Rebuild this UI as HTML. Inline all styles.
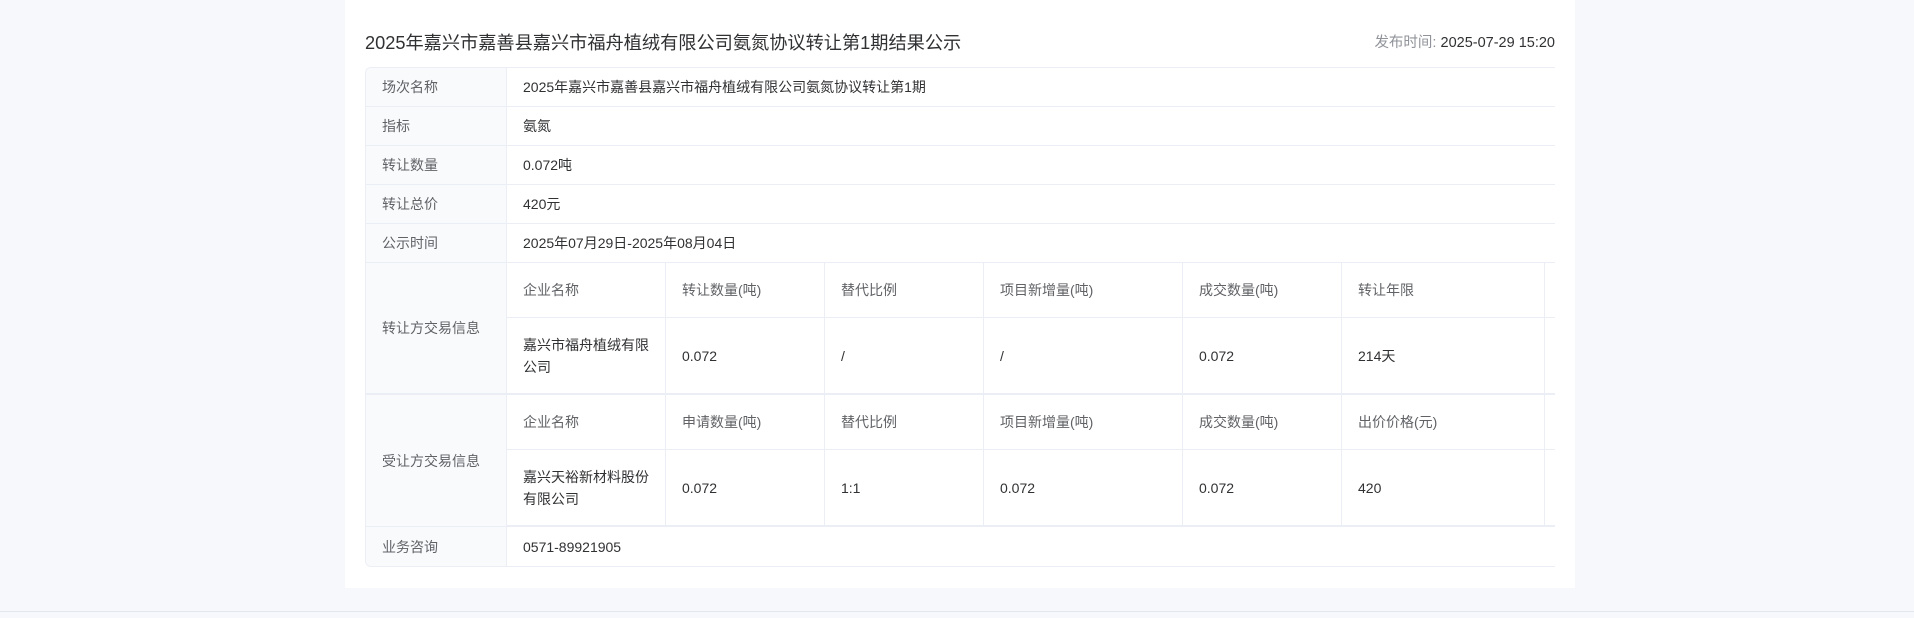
<!DOCTYPE html>
<html><head><meta charset="utf-8"><style>
*{margin:0;padding:0;box-sizing:border-box}
body{width:1914px;height:618px;background:#f7f8fb;font-family:"Liberation Sans","Noto Sans CJK SC",sans-serif;position:relative;overflow:hidden;color:#303133}
.panel{position:absolute;left:345px;top:0;width:1230px;height:588px;background:#fff}
.line{position:absolute;left:0;top:611px;width:1914px;height:1px;background:#e4e7ed}
.title{position:absolute;left:365px;top:31px;font-size:18.2px;color:#303133;white-space:nowrap;line-height:24px}
.time{position:absolute;right:359px;top:34px;font-size:14.5px;line-height:18px;color:#303133;white-space:nowrap}
.time span{color:#909399}
.tbl{position:absolute;left:365px;top:67px;width:1190px;height:500px;border:1px solid #ebeef5;border-right:none;border-radius:6px 0 0 6px;overflow:hidden}
.c{position:absolute;display:flex;align-items:center;padding-left:16px;font-size:14px;line-height:22px;border-bottom:1px solid #ebeef5;border-right:1px solid #ebeef5;white-space:nowrap}
.l{background:#f9fafc;color:#606266}
.h{color:#606266}
.w{white-space:normal;padding-right:12px}
</style></head><body>
<div class="panel"></div>
<div class="line"></div>
<div class="title">2025年嘉兴市嘉善县嘉兴市福舟植绒有限公司氨氮协议转让第1期结果公示</div>
<div class="time"><span>发布时间: </span>2025-07-29 15:20</div>
<div class="tbl">
<div class="c l" style="left:0;top:0;width:141px;height:39px">场次名称</div>
<div class="c" style="left:141px;top:0;width:1050px;height:39px">2025年嘉兴市嘉善县嘉兴市福舟植绒有限公司氨氮协议转让第1期</div>
<div class="c l" style="left:0;top:39px;width:141px;height:39px">指标</div>
<div class="c" style="left:141px;top:39px;width:1050px;height:39px">氨氮</div>
<div class="c l" style="left:0;top:78px;width:141px;height:39px">转让数量</div>
<div class="c" style="left:141px;top:78px;width:1050px;height:39px">0.072吨</div>
<div class="c l" style="left:0;top:117px;width:141px;height:39px">转让总价</div>
<div class="c" style="left:141px;top:117px;width:1050px;height:39px">420元</div>
<div class="c l" style="left:0;top:156px;width:141px;height:39px">公示时间</div>
<div class="c" style="left:141px;top:156px;width:1050px;height:39px">2025年07月29日-2025年08月04日</div>

<div class="c l" style="left:0;top:195px;width:141px;height:132px;border-bottom:2px solid #ebeef5">转让方交易信息</div>
<div class="c h" style="left:141px;top:195px;width:159px;height:55px">企业名称</div>
<div class="c h" style="left:300px;top:195px;width:159px;height:55px">转让数量(吨)</div>
<div class="c h" style="left:459px;top:195px;width:159px;height:55px">替代比例</div>
<div class="c h" style="left:618px;top:195px;width:199px;height:55px">项目新增量(吨)</div>
<div class="c h" style="left:817px;top:195px;width:159px;height:55px">成交数量(吨)</div>
<div class="c h" style="left:976px;top:195px;width:203px;height:55px">转让年限</div>
<div class="c h" style="left:1179px;top:195px;width:20px;height:55px"></div>
<div class="c w" style="left:141px;top:250px;width:159px;height:77px;border-bottom:2px solid #ebeef5">嘉兴市福舟植绒有限公司</div>
<div class="c" style="left:300px;top:250px;width:159px;height:77px;border-bottom:2px solid #ebeef5">0.072</div>
<div class="c" style="left:459px;top:250px;width:159px;height:77px;border-bottom:2px solid #ebeef5">/</div>
<div class="c" style="left:618px;top:250px;width:199px;height:77px;border-bottom:2px solid #ebeef5">/</div>
<div class="c" style="left:817px;top:250px;width:159px;height:77px;border-bottom:2px solid #ebeef5">0.072</div>
<div class="c" style="left:976px;top:250px;width:203px;height:77px;border-bottom:2px solid #ebeef5">214天</div>
<div class="c" style="left:1179px;top:250px;width:20px;height:77px;border-bottom:2px solid #ebeef5"></div>

<div class="c l" style="left:0;top:327px;width:141px;height:132px;border-bottom:1px solid #ebeef5">受让方交易信息</div>
<div class="c h" style="left:141px;top:327px;width:159px;height:55px">企业名称</div>
<div class="c h" style="left:300px;top:327px;width:159px;height:55px">申请数量(吨)</div>
<div class="c h" style="left:459px;top:327px;width:159px;height:55px">替代比例</div>
<div class="c h" style="left:618px;top:327px;width:199px;height:55px">项目新增量(吨)</div>
<div class="c h" style="left:817px;top:327px;width:159px;height:55px">成交数量(吨)</div>
<div class="c h" style="left:976px;top:327px;width:203px;height:55px">出价价格(元)</div>
<div class="c h" style="left:1179px;top:327px;width:20px;height:55px"></div>
<div class="c w" style="left:141px;top:382px;width:159px;height:77px;border-bottom:2px solid #ebeef5">嘉兴天裕新材料股份有限公司</div>
<div class="c" style="left:300px;top:382px;width:159px;height:77px;border-bottom:2px solid #ebeef5">0.072</div>
<div class="c" style="left:459px;top:382px;width:159px;height:77px;border-bottom:2px solid #ebeef5">1:1</div>
<div class="c" style="left:618px;top:382px;width:199px;height:77px;border-bottom:2px solid #ebeef5">0.072</div>
<div class="c" style="left:817px;top:382px;width:159px;height:77px;border-bottom:2px solid #ebeef5">0.072</div>
<div class="c" style="left:976px;top:382px;width:203px;height:77px;border-bottom:2px solid #ebeef5">420</div>
<div class="c" style="left:1179px;top:382px;width:20px;height:77px;border-bottom:2px solid #ebeef5"></div>

<div class="c l" style="left:0;top:459px;width:141px;height:40px;border-bottom:none">业务咨询</div>
<div class="c" style="left:141px;top:459px;width:1050px;height:40px;border-bottom:none">0571-89921905</div>
</div>
</body></html>
